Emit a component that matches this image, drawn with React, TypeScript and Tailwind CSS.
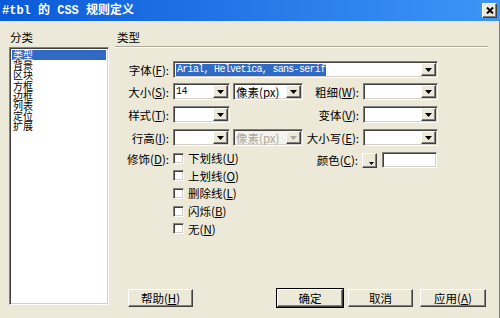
import type { ReactNode } from "react";

const sunken =
  "border border-t-[#808080] border-l-[#808080] border-b-white border-r-white shadow-[inset_1px_1px_0_#404040,inset_-1px_-1px_0_#d4d0c8]";
const raised =
  "border border-t-white border-l-white border-b-[#404040] border-r-[#404040] shadow-[inset_-1px_-1px_0_#808080]";
const mono = "font-['Liberation_Mono','Noto_Sans_CJK_SC',monospace]";

function Arrow({ gray }: { gray?: boolean }) {
  return (
    <svg width="7" height="4" viewBox="0 0 7 4">
      <path d="M0 0h7L3.5 4z" fill={gray ? "#aca899" : "#000"} />
    </svg>
  );
}

function Combo({
  className,
  children,
  disabled,
}: {
  className: string;
  children?: ReactNode;
  disabled?: boolean;
}) {
  return (
    <div
      className={`flex h-[17px] shrink-0 ${sunken} ${disabled ? "bg-[#f4f3ee]" : "bg-white"} ${className}`}
    >
      <div className="flex min-w-0 flex-1 items-center overflow-hidden whitespace-nowrap pl-[2px]">
        {children}
      </div>
      <div className={`m-[1px] flex w-[15px] items-center justify-center bg-[#ece9d8] ${raised}`}>
        <Arrow gray={disabled} />
      </div>
    </div>
  );
}

function Label({ text, k, className }: { text: string; k: string; className: string }) {
  return (
    <div className={`shrink-0 whitespace-nowrap pr-[4px] text-right ${className}`}>
      {text}(<span className="underline">{k}</span>):
    </div>
  );
}

function Check({ text, k }: { text: string; k: string }) {
  return (
    <div className="flex h-[17.6px] items-center">
      <div className={`h-[11px] w-[11px] bg-white ${sunken}`} />
      <span className="ml-[4px] whitespace-nowrap">
        {text}(<span className="underline">{k}</span>)
      </span>
    </div>
  );
}

function Btn({ children, className, def }: { children: ReactNode; className: string; def?: boolean }) {
  return (
    <div
      className={`flex h-[18px] items-center justify-center bg-[#ece9d8] ${def ? "outline outline-1 outline-black" : ""} ${raised} ${className}`}
    >
      {children}
    </div>
  );
}

const cats = ["类型", "背景", "区块", "方框", "边框", "列表", "定位", "扩展"];

export default function App() {
  return (
    <div className="flex h-[318px] w-[500px] flex-col overflow-hidden bg-[#ece9d8] font-['Noto_Sans_CJK_SC',sans-serif] text-[11.5px] leading-[14px] text-black">
      <div className="flex h-[21px] shrink-0 items-center justify-between bg-gradient-to-r from-[#0a5ad8] to-[#3d95f7] pl-[2px] pr-[3px]">
        <span className={`${mono} text-[12px] font-bold text-white`}>#tbl 的 CSS 规则定义</span>
        <div className={`flex h-[15px] w-[15px] items-center justify-center bg-[#ece9d8] ${raised}`}>
          <svg width="8" height="7" viewBox="0 0 8 7">
            <path d="M1 0.5l6 6M7 0.5l-6 6" stroke="#000" strokeWidth="2" />
          </svg>
        </div>
      </div>

      <div className="flex flex-1 border-r border-r-[#808080]">
        <div className="flex w-[115px] shrink-0 flex-col pl-[9px] pr-[6px]">
          <div className="h-[26px] pl-[1px] pt-[9px]">分类</div>
          <div className={`h-[258px] bg-white p-[2px] ${sunken}`}>
            {cats.map((c, i) => (
              <div
                key={c}
                className={`h-[10.2px] pl-[1px] text-[10px] leading-[10.2px] ${i === 0 ? "bg-[#316ac5] text-white" : ""}`}
              >
                {c}
              </div>
            ))}
          </div>
        </div>

        <div className="flex flex-1 flex-col pr-[11px]">
          <div className="h-[25px] pl-[2px] pt-[9px]">类型</div>
          <div className="h-[2px] border-t border-t-[#aca899] border-b border-b-white" />

          <div className="mt-[13px] flex items-center">
            <Label text="字体" k="F" className="w-[58px]" />
            <Combo className="w-[265px]">
              <span className={`${mono} bg-[#316ac5] px-[1px] text-[10px] leading-[12px] tracking-[-0.7px] text-white`}>
                Arial, Helvetica, sans-serif
              </span>
            </Combo>
          </div>

          <div className="mt-[5px] flex items-center">
            <Label text="大小" k="S" className="w-[58px]" />
            <Combo className="w-[57px]">
              <span className={`${mono} text-[10px] tracking-[-0.4px]`}>14</span>
            </Combo>
            <Combo className="ml-[3px] w-[70px]">
              <span>像素(px)</span>
            </Combo>
            <Label text="粗细" k="W" className="w-[60px]" />
            <Combo className="w-[75px]" />
          </div>

          <div className="mt-[6px] flex items-center">
            <Label text="样式" k="T" className="w-[58px]" />
            <Combo className="w-[57px]" />
            <div className="w-[73px] shrink-0" />
            <Label text="变体" k="V" className="w-[60px]" />
            <Combo className="w-[75px]" />
          </div>

          <div className="mt-[6px] flex items-center">
            <Label text="行高" k="I" className="w-[58px]" />
            <Combo className="w-[57px]" />
            <Combo className="ml-[3px] w-[70px]" disabled>
              <span className="text-[#aca899]">像素(px)</span>
            </Combo>
            <Label text="大小写" k="E" className="w-[60px]" />
            <Combo className="w-[75px]" />
          </div>

          <div className="mt-[3.5px] flex items-start">
            <Label text="修饰" k="D" className="mt-[2px] w-[58px]" />
            <div className="flex w-[130px] shrink-0 flex-col">
              <Check text="下划线" k="U" />
              <Check text="上划线" k="O" />
              <Check text="删除线" k="L" />
              <Check text="闪烁" k="B" />
              <Check text="无" k="N" />
            </div>
            <div className="mt-[2.5px] flex h-[16px] items-center">
              <Label text="颜色" k="C" className="w-[59px]" />
              <div className={`relative h-[15px] w-[15px] shrink-0 bg-[#ece9d8] ${raised}`}>
                <div className="absolute bottom-[2px] right-[2px] flex">
                  <svg width="5" height="3" viewBox="0 0 5 3">
                    <path d="M0 0h5L2.5 3z" fill="#000" />
                  </svg>
                </div>
              </div>
              <div className={`ml-[5px] h-[16px] w-[55px] bg-white ${sunken}`} />
            </div>
          </div>

          <div className="mb-[11px] mt-auto flex items-center pl-[13px]">
            <Btn className="w-[65px]">
              帮助(<span className="underline">H</span>)
            </Btn>
            <Btn className="ml-[84px] w-[66px]" def>
              确定
            </Btn>
            <Btn className="ml-[5px] w-[65px]">取消</Btn>
            <Btn className="ml-[7px] w-[66px]">
              应用(<span className="underline">A</span>)
            </Btn>
          </div>
        </div>
      </div>
    </div>
  );
}
